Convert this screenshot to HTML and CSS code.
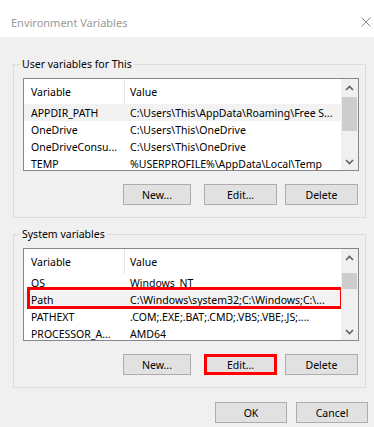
FILE: index.html
```html
<!DOCTYPE html>
<html lang="en">
<head>
    <meta charset="UTF-8">
    <meta name="viewport" content="width=device-width, initial-scale=1.0">
    <title>Environment Variables</title>
    <link rel="stylesheet" href="styles.css">
</head>
<body>

<div class="window">
    <div class="titlebar">
        <span class="title">Environment Variables</span>
        <svg class="close" width="10" height="10" viewBox="0 0 10 10">
            <path d="M0.5 0.5 L9.5 9.5 M9.5 0.5 L0.5 9.5" stroke="#8a8a8a" stroke-width="1" fill="none"/>
        </svg>
    </div>

    <div class="content">
        <fieldset class="group">
            <legend>User variables for This</legend>
            <div class="listview">
                <div class="lv-body">
                    <div class="lv-head">
                        <span class="col-var">Variable</span>
                        <span class="col-val">Value</span>
                    </div>
                    <div class="lv-row selected">
                        <span class="col-var">APPDIR_PATH</span>
                        <span class="col-val">C:\Users\This\AppData\Roaming\Free S...</span>
                    </div>
                    <div class="lv-row">
                        <span class="col-var">OneDrive</span>
                        <span class="col-val">C:\Users\This\OneDrive</span>
                    </div>
                    <div class="lv-row">
                        <span class="col-var">OneDriveConsu...</span>
                        <span class="col-val">C:\Users\This\OneDrive</span>
                    </div>
                    <div class="lv-row">
                        <span class="col-var">TEMP</span>
                        <span class="col-val">%USERPROFILE%\AppData\Local\Temp</span>
                    </div>
                </div>
                <div class="scrollbar">
                    <div class="sb-arrow">
                        <svg width="9" height="6" viewBox="0 0 9 6"><path d="M1 5 L4.5 1.5 L8 5" stroke="#606060" stroke-width="1.6" fill="none"/></svg>
                    </div>
                    <div class="sb-track"><div class="sb-thumb"></div></div>
                    <div class="sb-arrow">
                        <svg width="9" height="6" viewBox="0 0 9 6"><path d="M1 1 L4.5 4.5 L8 1" stroke="#606060" stroke-width="1.6" fill="none"/></svg>
                    </div>
                </div>
            </div>
            <div class="btn-row">
                <button class="btn-new">New...</button>
                <button>Edit...</button>
                <button>Delete</button>
            </div>
        </fieldset>

        <fieldset class="group group-system">
            <legend>System variables</legend>
            <div class="listview">
                <div class="lv-body">
                    <div class="lv-head">
                        <span class="col-var">Variable</span>
                        <span class="col-val">Value</span>
                    </div>
                    <div class="lv-row">
                        <span class="col-var">OS</span>
                        <span class="col-val">Windows_NT</span>
                    </div>
                    <div class="lv-row selected">
                        <span class="col-var">Path</span>
                        <span class="col-val">C:\Windows\system32;C:\Windows;C:\...</span>
                        <span class="marker"></span>
                    </div>
                    <div class="lv-row">
                        <span class="col-var">PATHEXT</span>
                        <span class="col-val">.COM;.EXE;.BAT;.CMD;.VBS;.VBE;.JS;....</span>
                    </div>
                    <div class="lv-row">
                        <span class="col-var">PROCESSOR_A...</span>
                        <span class="col-val">AMD64</span>
                    </div>
                </div>
                <div class="scrollbar">
                    <div class="sb-arrow">
                        <svg width="9" height="6" viewBox="0 0 9 6"><path d="M1 5 L4.5 1.5 L8 5" stroke="#606060" stroke-width="1.6" fill="none"/></svg>
                    </div>
                    <div class="sb-track"><div class="sb-thumb small"></div></div>
                    <div class="sb-arrow">
                        <svg width="9" height="6" viewBox="0 0 9 6"><path d="M1 1 L4.5 4.5 L8 1" stroke="#606060" stroke-width="1.6" fill="none"/></svg>
                    </div>
                </div>
            </div>
            <div class="btn-row">
                <button class="btn-new">New...</button>
                <button class="marked">Edit...</button>
                <button>Delete</button>
            </div>
        </fieldset>

        <div class="dialog-buttons">
            <button>OK</button>
            <button>Cancel</button>
        </div>
    </div>
</div>

</body>
</html>
```

FILE: styles.css
```css
* {
    box-sizing: border-box;
}
body {
    margin: 0;
    font-family: "Noto Sans", sans-serif;
    font-size: 10.5px;
    color: #000;
    background: #f0f0f0;
}
.window {
    width: 374px;
    height: 427px;
    overflow: hidden;
    background: #f0f0f0;
}
.titlebar {
    height: 37px;
    background: #fff;
    display: flex;
    justify-content: space-between;
    align-items: center;
    padding: 7px 3px 0 11px;
}
.title {
    font-size: 11px;
    color: #999;
}
.content {
    padding: 20px 8px 0 13px;
}
.group {
    margin: 0;
    padding: 7px 6px 12px 9px;
    border: 1px solid #dcdcdc;
    min-width: 0;
}
.group-system {
    margin-top: 9px;
}
legend {
    padding: 0 2px;
    margin-left: -3px;
    line-height: 14px;
}
.listview {
    display: flex;
    height: 93px;
    border: 1px solid #828790;
    background: #fff;
}
.lv-body {
    flex: 1;
    overflow: hidden;
}
.lv-head {
    height: 25px;
    display: flex;
}
.lv-row {
    height: 17px;
    display: flex;
    align-items: center;
    position: relative;
}
.lv-row.selected {
    background: #f2f2f2;
}
.col-var {
    width: 101px;
    flex-shrink: 0;
    padding-left: 7px;
    white-space: nowrap;
    overflow: hidden;
}
.col-val {
    flex: 1;
    padding-left: 5px;
    white-space: nowrap;
    overflow: hidden;
}
.lv-head span {
    display: flex;
    align-items: center;
}
.lv-head .col-var {
    border-right: 1px solid #e5e5e5;
}
/* red highlight drawn over the Path row */
.marker {
    position: absolute;
    left: 3px;
    top: -4px;
    width: 316px;
    height: 22px;
    border: 3px solid #f00;
}
.scrollbar {
    width: 17px;
    display: flex;
    flex-direction: column;
    background: #f0f0f0;
}
.sb-arrow {
    height: 17px;
    display: flex;
    align-items: center;
    justify-content: center;
}
.sb-track {
    flex: 1;
    padding: 1px 1px 0;
}
.sb-thumb {
    height: 34px;
    background: #cdcdcd;
}
.sb-thumb.small {
    margin-top: 6px;
    height: 16px;
}
.btn-row {
    display: flex;
    justify-content: flex-end;
    margin-top: 13px;
    padding-right: 1px;
}
button {
    font: inherit;
    color: #000;
    width: 73px;
    height: 21px;
    padding: 0;
    margin-left: 8px;
    background: #e1e1e1;
    border: 1px solid #adadad;
}
.btn-row .btn-new {
    width: 68px;
    margin-right: 5px;
}
button.marked {
    border: 3px solid #f00;
}
.dialog-buttons {
    display: flex;
    justify-content: flex-end;
    margin: 14px -2px 0 0;
}
.dialog-buttons button {
    width: 72px;
    margin-left: 9px;
}
```
